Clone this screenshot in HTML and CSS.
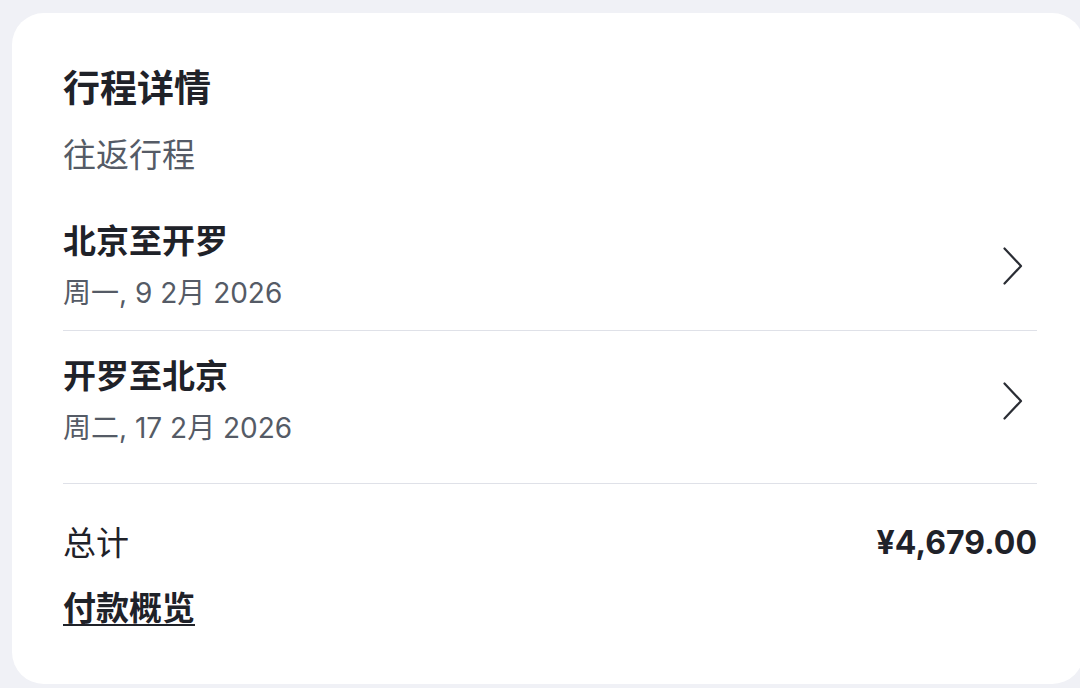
FILE: index.html
```html
<!DOCTYPE html>
<html lang="zh-CN">
<head>
<meta charset="utf-8">
<title>行程详情</title>
<link rel="stylesheet" href="styles.css">
</head>
<body>
<main class="card">
  <h1 class="title">行程详情</h1>
  <p class="subtitle">往返行程</p>
  <ul class="legs">
    <li class="leg">
      <div class="leg-text">
        <div class="leg-route">北京至开罗</div>
        <div class="leg-date">周一, 9 2月 2026</div>
      </div>
      <svg class="chev" width="22" height="38" viewBox="0 0 22 38" aria-hidden="true"><path d="M2.5 1.5 L19 19 L2.5 36.5" fill="none" stroke="#2a2d34" stroke-width="2.2" stroke-linecap="round" stroke-linejoin="round"/></svg>
    </li>
    <li class="leg">
      <div class="leg-text">
        <div class="leg-route">开罗至北京</div>
        <div class="leg-date">周二, 17 2月 2026</div>
      </div>
      <svg class="chev" width="22" height="38" viewBox="0 0 22 38" aria-hidden="true"><path d="M2.5 1.5 L19 19 L2.5 36.5" fill="none" stroke="#2a2d34" stroke-width="2.2" stroke-linecap="round" stroke-linejoin="round"/></svg>
    </li>
  </ul>
  <section class="totals">
    <div class="total-row">
      <span class="total-label">总计</span>
      <span class="total-amount">¥4,679.00</span>
    </div>
    <a class="pay-link" href="#">付款概览</a>
  </section>
</main>
</body>
</html>
```

FILE: styles.css
```css
html, body {
  margin: 0;
  padding: 0;
  background: #f0f1f6;
}
body {
  font-family: "Inter", "Noto Sans CJK SC", "Noto Sans", sans-serif;
  color: #1f2229;
  padding: 13px 0 0 12px;
  height: 688px;
  box-sizing: border-box;
  overflow: hidden;
}
.card {
  width: 1072px;
  height: 671px;
  box-sizing: border-box;
  background: #ffffff;
  border-radius: 32px;
  padding: 52px 47px 0 51px;
}
.title {
  margin: 0;
  font-size: 37px;
  line-height: 48px;
  font-weight: 700;
  color: #1f2229;
}
.subtitle {
  margin: 20px 0 0;
  font-size: 33px;
  line-height: 44px;
  color: #555b66;
}
.legs {
  list-style: none;
  margin: 19px 0 0;
  padding: 0;
}
.leg {
  display: flex;
  align-items: center;
  justify-content: space-between;
  padding: 23px 0 17px;
}
.leg + .leg {
  border-top: 1px solid #dfe1e8;
}
.leg-text {
  display: flex;
  flex-direction: column;
  gap: 10px;
}
.leg-route {
  font-size: 33px;
  line-height: 44px;
  font-weight: 700;
  color: #1f2229;
}
.leg-date {
  font-size: 28px;
  line-height: 40px;
  color: #555b66;
}
.chev {
  margin-right: 13px;
  display: block;
}
.totals {
  margin-top: 18px;
  border-top: 1px solid #dfe1e8;
  padding-top: 37px;
}
.total-row {
  display: flex;
  justify-content: space-between;
  align-items: center;
  line-height: 44px;
}
.total-label {
  font-size: 33px;
  color: #1f2229;
}
.total-amount {
  font-size: 32px;
  font-weight: 700;
  color: #1f2229;
}
.pay-link {
  display: inline-block;
  margin-top: 21px;
  font-size: 33px;
  line-height: 44px;
  font-weight: 700;
  color: #1f2229;
  text-decoration: underline;
  text-decoration-thickness: 2px;
  text-underline-offset: 4px;
}
```
